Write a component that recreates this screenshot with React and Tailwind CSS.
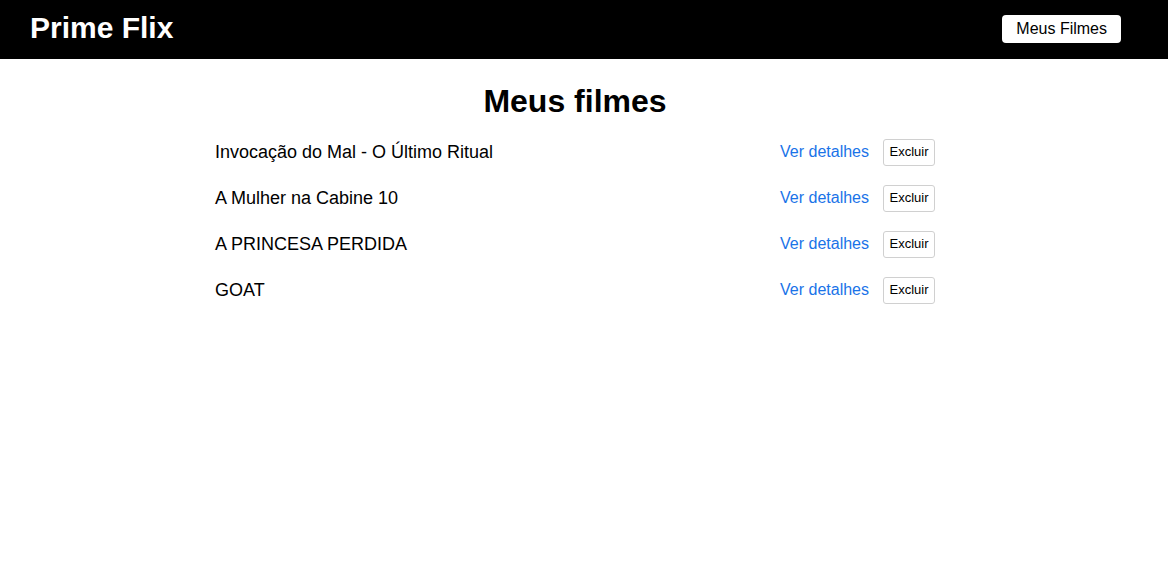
import React from 'react';

const filmes = [
  { id: 1, title: 'Invocação do Mal - O Último Ritual' },
  { id: 2, title: 'A Mulher na Cabine 10' },
  { id: 3, title: 'A PRINCESA PERDIDA' },
  { id: 4, title: 'GOAT' },
];

const App = () => {
  return (
    <div className="min-h-[578px] bg-white text-black" style={{ fontFamily: '"Liberation Sans", Arial, sans-serif' }}>
      {/* Header */}
      <header className="h-[59px] bg-black flex items-center justify-between pl-[30px] pr-[47px]">
        <a className="text-white text-[30px] font-bold leading-none mb-[4px]">Prime Flix</a>
        <a className="bg-white text-black text-[16px] rounded-[4px] px-[14px] h-[28px] flex items-center mb-[2px]">Meus Filmes</a>
      </header>

      {/* Lista */}
      <div className="pr-[18px]">
        <div className="mx-auto w-[720px]">
          <h1 className="text-center text-[32px] font-bold mt-[24px] mb-[9px] leading-[37px]">Meus filmes</h1>
          <ul>
            {filmes.map((item) => (
              <li key={item.id} className="flex items-center justify-between h-[46px]">
                <span className="text-[18px]">{item.title}</span>
                <div className="flex items-center">
                  <a className="text-[#1a73e8] text-[16px] mr-[14px]">Ver detalhes</a>
                  <button className="text-[13px] h-[27px] w-[52px] border border-[#d0d0d0] rounded-[3px] bg-white">Excluir</button>
                </div>
              </li>
            ))}
          </ul>
        </div>
      </div>
    </div>
  );
};

export default App;
